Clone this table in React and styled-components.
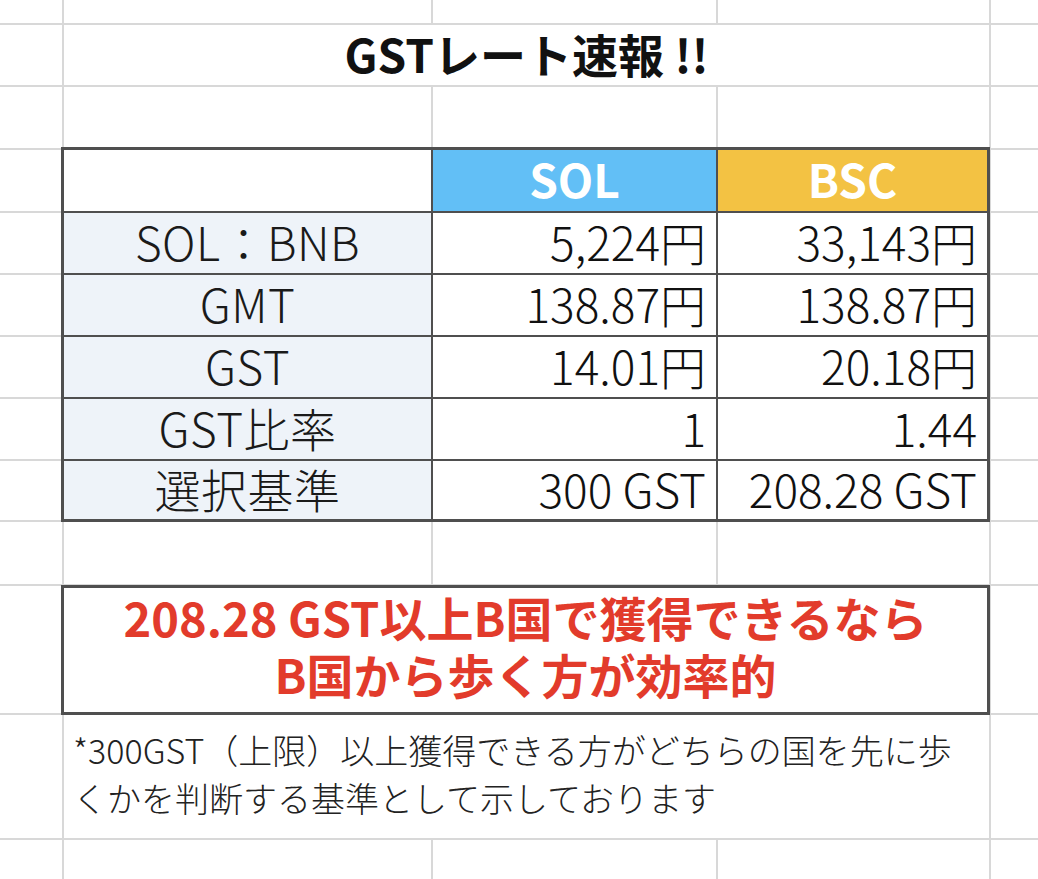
import React from 'react';
import styled, { createGlobalStyle } from 'styled-components';

const FONT = '"Noto Sans CJK JP", "Noto Sans", sans-serif';

const GlobalStyle = createGlobalStyle`
	html, body {
		margin: 0;
		padding: 0;
		background: #ffffff;
		overflow: hidden;
	}
	body {
		font-family: ${FONT};
	}
`;

const ROWS = [
	{ label: 'SOL：BNB', sol: '5,224円', bsc: '33,143円' },
	{ label: 'GMT', sol: '138.87円', bsc: '138.87円' },
	{ label: 'GST', sol: '14.01円', bsc: '20.18円' },
	{ label: 'GST比率', sol: '1', bsc: '1.44' },
	{ label: '選択基準', sol: '300 GST', bsc: '208.28 GST' }
];

const blanks = (n, key) => Array.from({ length: n }, (_, i) => <Cell key={key + i} />);

const App = () => {
	return (
		<>
			<GlobalStyle />
			<Sheet>
				{blanks(5, 'r1-')}

				<Cell />
				<Title>GSTレート速報 !!</Title>
				<Cell />

				{blanks(5, 'r3-')}

				<Cell />
				<RateTable>
					<TableCell />
					<HeaderCell $bg='#62bff6'>SOL</HeaderCell>
					<HeaderCell $bg='#f3c243'>BSC</HeaderCell>
					{ROWS.map((row) => (
						<React.Fragment key={row.label}>
							<LabelCell>{row.label}</LabelCell>
							<ValueCell>{row.sol}</ValueCell>
							<ValueCell>{row.bsc}</ValueCell>
						</React.Fragment>
					))}
				</RateTable>
				<Cell />
				{blanks(10, 'tb-')}

				{blanks(5, 'r10-')}

				<Cell />
				<Callout>
					<CalloutLine>208.28 GST以上B国で獲得できるなら</CalloutLine>
					<CalloutLine>B国から歩く方が効率的</CalloutLine>
				</Callout>
				<Cell />

				<Cell />
				<Note>
					*300GST（上限）以上獲得できる方がどちらの国を先に歩
					<br />
					くかを判断する基準として示しております
				</Note>
				<Cell />

				{blanks(5, 'r13-')}
			</Sheet>
		</>
	);
};

const Sheet = styled.div`
	display: grid;
	width: 1038px;
	height: 879px;
	background-color: #d8d8d8;
	gap: 2px;
	grid-template-columns: 62px 367px 283px 271px 1fr;
	grid-template-rows: 23px 60px 61px 61px 60px 60px 60px 60px 59px 62px 127px 123px minmax(0, 1fr);
	overflow: hidden;
`;

const Cell = styled.div`
	background-color: #ffffff;
`;

const Title = styled.div`
	grid-column: span 3;
	background-color: #ffffff;
	display: flex;
	align-items: center;
	justify-content: center;
	font-family: ${FONT};
	font-weight: 700;
	font-size: 46px;
	line-height: 1;
	color: #111111;
	padding-bottom: 5px;
`;

const RateTable = styled.div`
	grid-column: span 3;
	grid-row: span 6;
	margin: -3px -1px -2px -3px;
	display: grid;
	grid-template-columns: 367px 283px minmax(0, 1fr);
	grid-template-rows: 61px 60px 60px 60px 60px minmax(0, 1fr);
	gap: 2px;
	border: 3px solid #4f4f4f;
	background-color: #4f4f4f;
	position: relative;
	z-index: 1;
`;

const TableCell = styled.div`
	background-color: #ffffff;
`;

const HeaderCell = styled.div`
	background-color: ${(p) => p.$bg};
	color: #ffffff;
	font-family: ${FONT};
	font-weight: 700;
	font-size: 46px;
	line-height: 1;
	display: flex;
	align-items: center;
	justify-content: center;
	padding-bottom: 5px;
`;

const LabelCell = styled.div`
	background-color: #eef3f9;
	color: #1a1a1a;
	font-family: ${FONT};
	font-weight: 300;
	font-size: 46px;
	line-height: 1;
	letter-spacing: 0.5px;
	display: flex;
	align-items: center;
	justify-content: center;
	padding-bottom: 5px;
`;

const ValueCell = styled.div`
	background-color: #ffffff;
	color: #111111;
	font-family: ${FONT};
	font-weight: 300;
	font-size: 46px;
	line-height: 1;
	display: flex;
	align-items: center;
	justify-content: flex-end;
	padding: 0 10px 5px 0;
	white-space: nowrap;
`;

const Callout = styled.div`
	grid-column: span 3;
	margin: -1px -1px -2px -3px;
	border: 3px solid #4f4f4f;
	background-color: #ffffff;
	display: flex;
	flex-direction: column;
	align-items: center;
	justify-content: center;
	gap: 10px;
	padding-bottom: 10px;
	position: relative;
	z-index: 1;
`;

const CalloutLine = styled.span`
	color: #e23b2b;
	font-family: ${FONT};
	font-weight: 700;
	font-size: 47px;
	line-height: 47px;
	white-space: nowrap;
`;

const Note = styled.div`
	grid-column: span 3;
	background-color: #ffffff;
	color: #222222;
	font-family: ${FONT};
	font-weight: 300;
	font-size: 34px;
	line-height: 48px;
	padding: 11px 0 0 9px;
	white-space: nowrap;
	overflow: hidden;
`;

export default App;
